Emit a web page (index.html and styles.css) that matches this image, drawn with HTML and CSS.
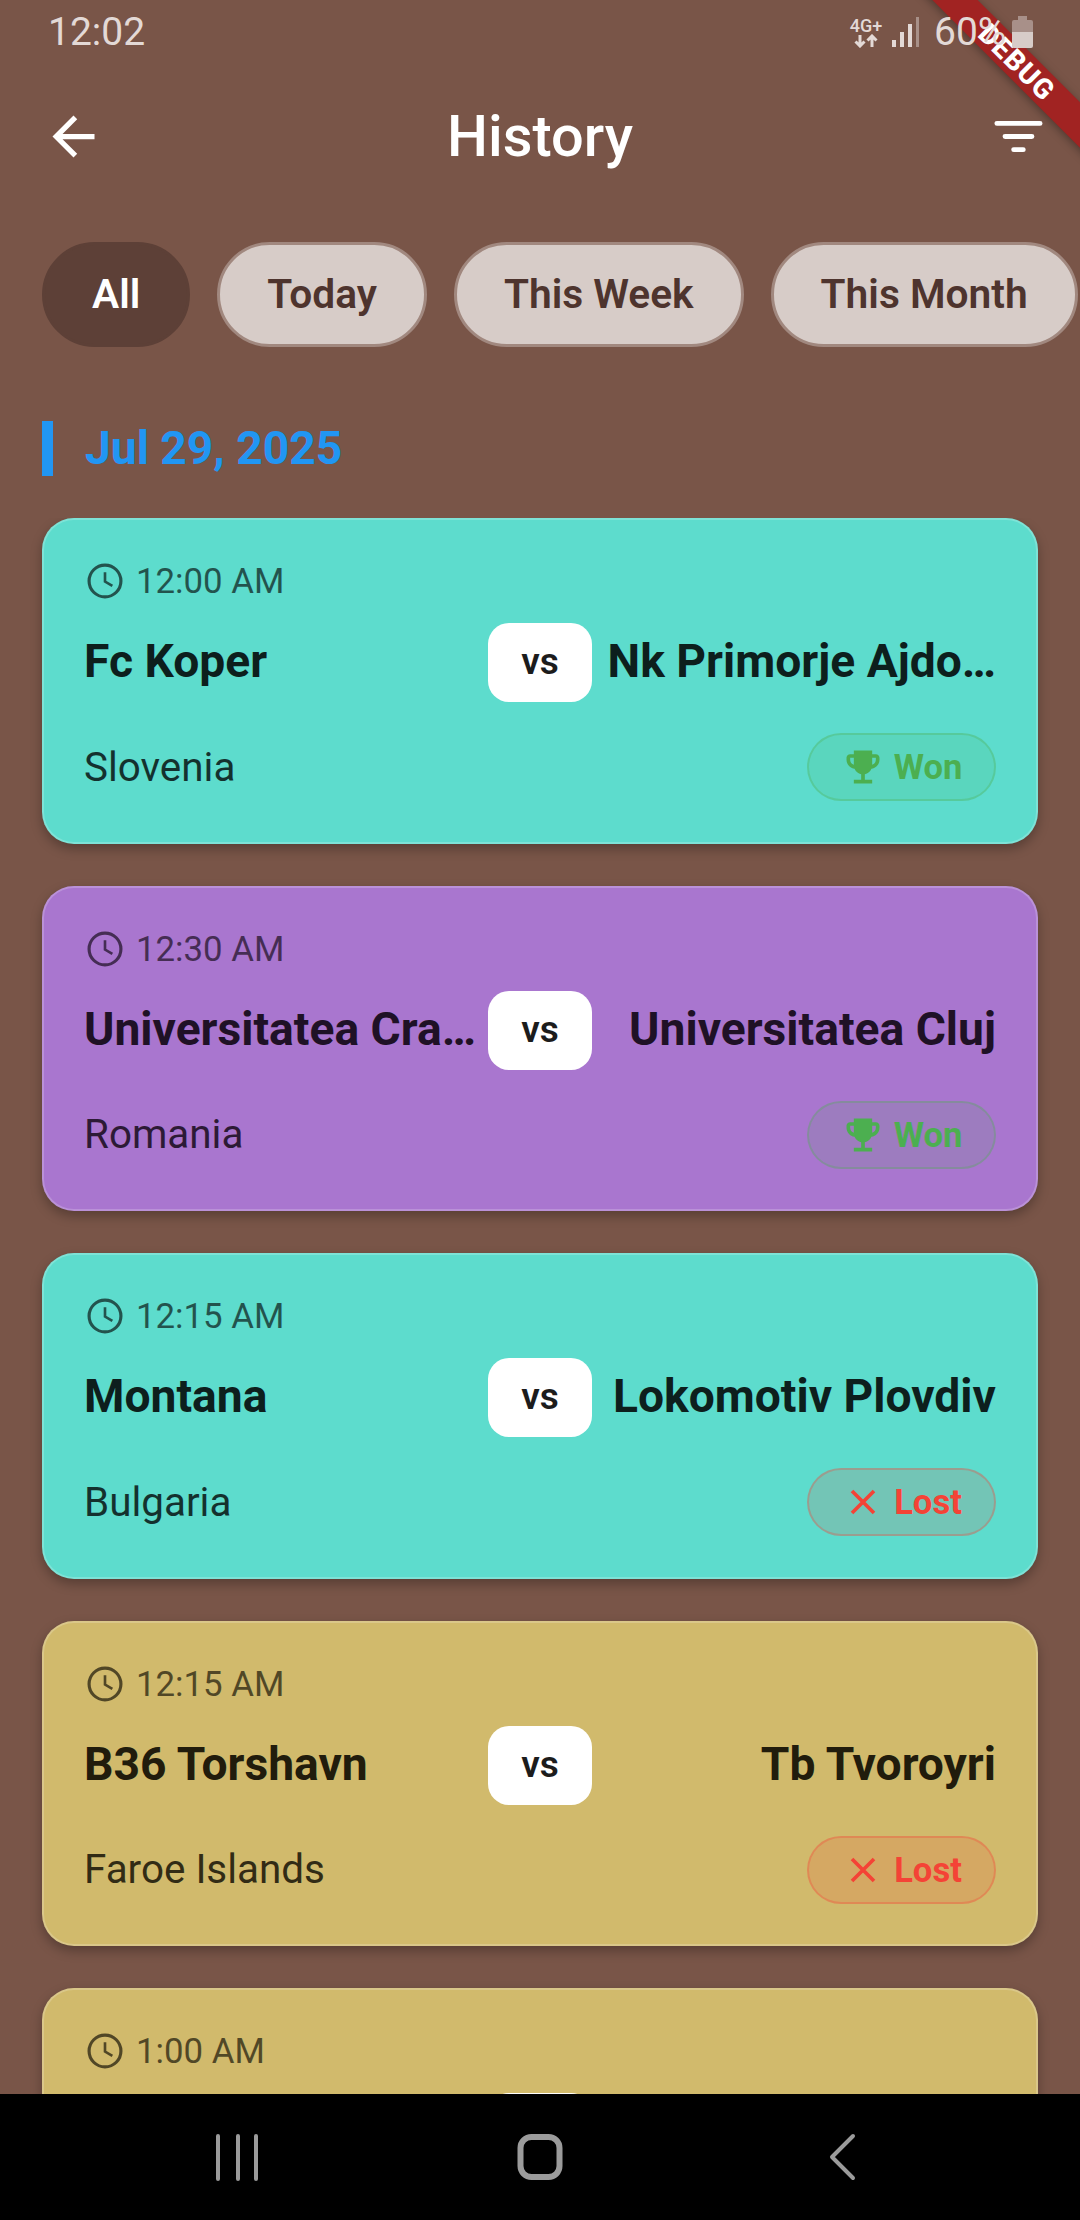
FILE: index.html
```html
<!DOCTYPE html>
<html lang="en">
<head>
    <meta charset="UTF-8">
    <meta name="viewport" content="width=device-width, initial-scale=1.0">
    <title>History</title>
    <link rel="stylesheet" href="styles.css">
</head>
<body>
    <div class="screen">
        <!-- status bar -->
        <div class="status-bar">
            <span class="clock">12:02</span>
            <div class="status-icons">
                <div class="net">
                    <span class="net-label">4G+</span>
                    <svg class="net-arrows" width="24" height="14" viewBox="0 0 24 14"><path d="M6 1v11M1.500 7.500 6 12l4.500-4.500M18 13V2M13.500 6.500 18 2l4.500 4.500" fill="none" stroke="currentColor" stroke-width="3"/></svg>
                </div>
                <svg class="signal" width="28" height="30" viewBox="0 0 28 30">
                    <rect x="0" y="23" width="4" height="7" fill="currentColor"/>
                    <rect x="8" y="15" width="4" height="15" fill="currentColor"/>
                    <rect x="16" y="7" width="4" height="23" fill="currentColor"/>
                    <rect x="24" y="0" width="3" height="30" fill="currentColor" opacity="0.45"/>
                </svg>
                <span class="battery-text">60%</span>
                <svg class="battery" width="21" height="32" viewBox="0 0 21 32">
                    <path d="M6 0h9v4h4a2 2 0 0 1 2 2v10H0V6a2 2 0 0 1 2-2h4z" fill="#a89089"/>
                    <path d="M0 16h21v14a2 2 0 0 1-2 2H2a2 2 0 0 1-2-2z" fill="#d7ccc8"/>
                </svg>
            </div>
        </div>

        <!-- app bar -->
        <div class="app-bar">
            <svg class="back-icon" width="63" height="63" viewBox="0 0 24 24"><path d="M20 11H7.830l5.590-5.590L12 4l-8 8 8 8 1.410-1.410L7.830 13H20v-2z" fill="#fff"/></svg>
            <h1 class="title">History</h1>
            <svg class="filter-icon" width="63" height="63" viewBox="0 0 24 24"><path d="M3.800 7h16.400M6.900 12h10.200M10.200 17h3.600" fill="none" stroke="#fff" stroke-width="1.900" stroke-linecap="round"/></svg>
        </div>

        <!-- filters -->
        <div class="chips">
            <div class="chip chip-active">All</div>
            <div class="chip">Today</div>
            <div class="chip">This Week</div>
            <div class="chip">This Month</div>
        </div>

        <div class="section-head">
            <div class="section-bar"></div>
            <span class="section-date">Jul 29, 2025</span>
        </div>

        <div class="list">
            <div class="card card-teal">
                <div class="time-row">
                    <svg class="clock-icon" width="42" height="42" viewBox="0 0 24 24"><circle cx="12" cy="12" r="9.100" fill="none" stroke="currentColor" stroke-width="1.800"/><path d="M12 7v5.300l4.200 2.500" fill="none" stroke="currentColor" stroke-width="1.500"/></svg>
                    <span>12:00 AM</span>
                </div>
                <div class="match-row">
                    <span class="team">Fc Koper</span>
                    <span class="vs">vs</span>
                    <span class="team team-away">Nk Primorje Ajdo…</span>
                </div>
                <div class="bottom-row">
                    <span class="country">Slovenia</span>
                    <span class="badge badge-won">
                        <svg width="44" height="44" viewBox="0 0 24 24"><path d="M19 5h-2V3H7v2H5c-1.100 0-2 .9-2 2v1c0 2.550 1.920 4.630 4.390 4.940.63 1.500 1.980 2.630 3.610 2.960V19H7v2h10v-2h-4v-3.100c1.630-.33 2.980-1.460 3.610-2.960C19.080 12.630 21 10.550 21 8V7c0-1.100-.9-2-2-2zM5 8V7h2v3.820C5.840 10.400 5 9.300 5 8zm14 0c0 1.300-.84 2.400-2 2.820V7h2v1z" fill="currentColor"/></svg>
                        Won
                    </span>
                </div>
            </div>

            <div class="card card-purple">
                <div class="time-row">
                    <svg class="clock-icon" width="42" height="42" viewBox="0 0 24 24"><circle cx="12" cy="12" r="9.100" fill="none" stroke="currentColor" stroke-width="1.800"/><path d="M12 7v5.300l4.200 2.500" fill="none" stroke="currentColor" stroke-width="1.500"/></svg>
                    <span>12:30 AM</span>
                </div>
                <div class="match-row">
                    <span class="team">Universitatea Cra…</span>
                    <span class="vs">vs</span>
                    <span class="team team-away">Universitatea Cluj</span>
                </div>
                <div class="bottom-row">
                    <span class="country">Romania</span>
                    <span class="badge badge-won">
                        <svg width="44" height="44" viewBox="0 0 24 24"><path d="M19 5h-2V3H7v2H5c-1.100 0-2 .9-2 2v1c0 2.550 1.920 4.630 4.390 4.940.63 1.500 1.980 2.630 3.610 2.960V19H7v2h10v-2h-4v-3.100c1.630-.33 2.980-1.460 3.610-2.960C19.080 12.630 21 10.550 21 8V7c0-1.100-.9-2-2-2zM5 8V7h2v3.820C5.840 10.400 5 9.300 5 8zm14 0c0 1.300-.84 2.400-2 2.820V7h2v1z" fill="currentColor"/></svg>
                        Won
                    </span>
                </div>
            </div>

            <div class="card card-teal">
                <div class="time-row">
                    <svg class="clock-icon" width="42" height="42" viewBox="0 0 24 24"><circle cx="12" cy="12" r="9.100" fill="none" stroke="currentColor" stroke-width="1.800"/><path d="M12 7v5.300l4.200 2.500" fill="none" stroke="currentColor" stroke-width="1.500"/></svg>
                    <span>12:15 AM</span>
                </div>
                <div class="match-row">
                    <span class="team">Montana</span>
                    <span class="vs">vs</span>
                    <span class="team team-away">Lokomotiv Plovdiv</span>
                </div>
                <div class="bottom-row">
                    <span class="country">Bulgaria</span>
                    <span class="badge badge-lost">
                        <svg width="44" height="44" viewBox="0 0 24 24"><path d="M6 6l12 12M18 6 6 18" fill="none" stroke="currentColor" stroke-width="2"/></svg>
                        Lost
                    </span>
                </div>
            </div>

            <div class="card card-gold">
                <div class="time-row">
                    <svg class="clock-icon" width="42" height="42" viewBox="0 0 24 24"><circle cx="12" cy="12" r="9.100" fill="none" stroke="currentColor" stroke-width="1.800"/><path d="M12 7v5.300l4.200 2.500" fill="none" stroke="currentColor" stroke-width="1.500"/></svg>
                    <span>12:15 AM</span>
                </div>
                <div class="match-row">
                    <span class="team">B36 Torshavn</span>
                    <span class="vs">vs</span>
                    <span class="team team-away">Tb Tvoroyri</span>
                </div>
                <div class="bottom-row">
                    <span class="country">Faroe Islands</span>
                    <span class="badge badge-lost">
                        <svg width="44" height="44" viewBox="0 0 24 24"><path d="M6 6l12 12M18 6 6 18" fill="none" stroke="currentColor" stroke-width="2"/></svg>
                        Lost
                    </span>
                </div>
            </div>

            <!-- cut off by the nav bar -->
            <div class="card card-gold">
                <div class="time-row">
                    <svg class="clock-icon" width="42" height="42" viewBox="0 0 24 24"><circle cx="12" cy="12" r="9.100" fill="none" stroke="currentColor" stroke-width="1.800"/><path d="M12 7v5.300l4.200 2.500" fill="none" stroke="currentColor" stroke-width="1.500"/></svg>
                    <span>1:00 AM</span>
                </div>
                <div class="match-row">
                    <span class="team"></span>
                    <span class="vs"></span>
                    <span class="team team-away"></span>
                </div>
            </div>
        </div>

        <!-- android nav bar -->
        <div class="nav-bar">
            <svg width="44" height="48" viewBox="0 0 44 48"><path d="M2 3v43M22 3v43M40 3v43" fill="none" stroke="#9b9b9b" stroke-width="4" stroke-linecap="round"/></svg>
            <svg width="50" height="50" viewBox="0 0 50 50"><rect x="5.500" y="5" width="39" height="40" rx="11" fill="none" stroke="#9b9b9b" stroke-width="6"/></svg>
            <svg width="30" height="48" viewBox="0 0 30 48"><path d="M26 3 5 24l21 21" fill="none" stroke="#9b9b9b" stroke-width="4" stroke-linecap="round" stroke-linejoin="round"/></svg>
        </div>

        <div class="debug-ribbon">DEBUG</div>
    </div>
</body>
</html>
```

FILE: styles.css
```css
* {
    box-sizing: border-box;
}

body {
    margin: 0;
    padding: 0;
    font-family: Roboto, "Noto Sans", Arial, sans-serif;
    background-color: #795548;
}

.screen {
    position: relative;
    width: 1080px;
    height: 2220px;
    overflow: hidden;
    display: flex;
    flex-direction: column;
    background-color: #795548;
}

/* status bar, sits above the debug ribbon */
.status-bar {
    position: relative;
    z-index: 2;
    height: 64px;
    flex-shrink: 0;
    display: flex;
    justify-content: space-between;
    align-items: center;
    padding: 0 47px 0 48px;
    color: #e3d9d6;
}

.clock {
    font-size: 39px;
}

.status-icons {
    display: flex;
    align-items: center;
}

.net {
    display: flex;
    flex-direction: column;
    align-items: center;
    width: 32px;
    margin-right: 10px;
}

.net-label {
    font-size: 18px;
    font-weight: 500;
    line-height: 17px;
}

.signal {
    margin-right: 14px;
}

.battery-text {
    font-size: 39px;
    width: 78px;
    white-space: nowrap;
}

/* app bar */
.app-bar {
    height: 144px;
    flex-shrink: 0;
    display: grid;
    grid-template-columns: 1fr auto 1fr;
    align-items: center;
    padding: 0 30px;
}

.back-icon {
    margin-left: 12px;
}

.filter-icon {
    justify-self: end;
}

.title {
    margin: 0;
    font-size: 57.750px;
    font-weight: 500;
    color: #fff;
}

/* filter chips */
.chips {
    display: flex;
    gap: 27px;
    padding: 34px 0 0 42px;
    flex-shrink: 0;
}

.chip {
    height: 105px;
    padding: 0 47px 2px;
    flex-shrink: 0;
    display: flex;
    align-items: center;
    border-radius: 53px;
    border: 3px solid #a1887f;
    background-color: #d7ccc8;
    color: #4e342e;
    font-size: 40.700px;
    font-weight: 600;
    white-space: nowrap;
}

.chip-active {
    border-color: #5d4037;
    background-color: #5d4037;
    color: #fff;
}

/* date heading */
.section-head {
    display: flex;
    align-items: center;
    gap: 32px;
    height: 55px;
    margin: 74px 0 42px 42px;
    flex-shrink: 0;
}

.section-bar {
    width: 11px;
    height: 55px;
    background-color: #2196f3;
}

.section-date {
    font-size: 46.200px;
    font-weight: 700;
    line-height: 52px;
    padding-bottom: 2px;
    color: #2196f3;
}

/* match cards */
.list {
    flex: 1;
    overflow: hidden;
    padding: 0 42px;
    min-height: 0;
}

.card {
    height: 325.500px;
    margin-bottom: 42px;
    padding: 42px 40px 0;
    border-radius: 32px;
    border: 2px solid rgba(255, 255, 255, 0.2);
    box-shadow: 0 5px 12px rgba(0, 0, 0, 0.28);
}

.card-teal {
    background-color: #5ddccd;
    color: #0d1f1d;
}

.card-purple {
    background-color: #a976cf;
    color: #1f1126;
}

.card-gold {
    background-color: #d1ba6c;
    color: #211c0c;
}

.time-row {
    display: flex;
    align-items: center;
    gap: 10px;
    height: 42px;
    margin-top: -2px;
    font-size: 34.800px;
    opacity: 0.72;
}

.match-row {
    display: flex;
    align-items: center;
    margin-top: 21px;
}

.team {
    flex: 1;
    min-width: 0;
    white-space: nowrap;
    font-size: 46.200px;
    line-height: 76px;
    font-weight: 700;
    padding-bottom: 3px;
}

.team-away {
    text-align: right;
}

.vs {
    width: 104px;
    height: 79px;
    flex-shrink: 0;
    display: flex;
    align-items: center;
    justify-content: center;
    padding-bottom: 2px;
    border-radius: 21px;
    background-color: #fff;
    color: #1c1c1c;
    font-size: 37px;
    font-weight: 600;
}

.bottom-row {
    display: flex;
    align-items: center;
    justify-content: space-between;
    margin-top: 31px;
}

.country {
    font-size: 40.400px;
    opacity: 0.9;
}

.badge {
    width: 189px;
    height: 68px;
    display: flex;
    align-items: center;
    justify-content: center;
    gap: 9px;
    border-radius: 34px;
    border-width: 2.500px;
    border-style: solid;
    font-size: 34.600px;
    font-weight: 700;
}

.badge-won {
    color: #4caf50;
    background-color: rgba(76, 175, 80, 0.12);
    border-color: rgba(76, 175, 80, 0.3);
}

.badge-lost {
    color: #f44336;
    background-color: rgba(244, 67, 54, 0.15);
    border-color: rgba(244, 67, 54, 0.3);
}

/* nav bar */
.nav-bar {
    height: 126px;
    flex-shrink: 0;
    display: grid;
    grid-template-columns: repeat(3, 302px);
    justify-content: center;
    justify-items: center;
    align-items: center;
    background-color: #000;
}

/* flutter debug banner */
.debug-ribbon {
    position: absolute;
    z-index: 1;
    left: 867px;
    top: 46px;
    width: 300px;
    height: 32px;
    transform: rotate(45deg);
    display: flex;
    align-items: center;
    justify-content: center;
    background-color: #a12322;
    box-shadow: 0 2px 10px rgba(0, 0, 0, 0.35);
    color: #fff;
    font-size: 28px;
    font-weight: 800;
    letter-spacing: 1px;
}
```
